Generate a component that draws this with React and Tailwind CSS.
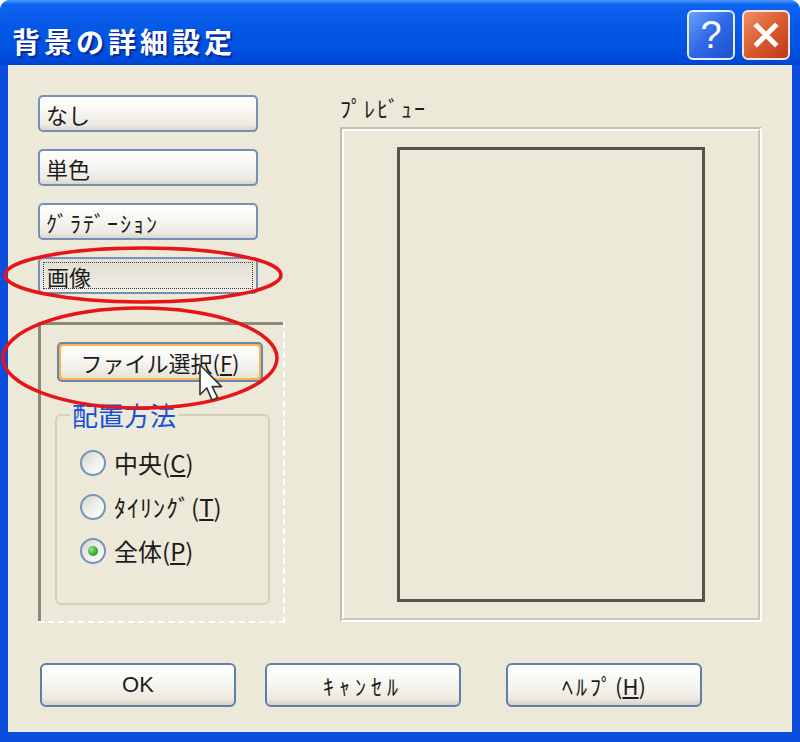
import React from "react";

function Btn({ children, pressed }) {
  if (pressed) {
    return (
      <div className="w-[220px] h-[37px] rounded-[5px] border-2 border-[#7390b6] bg-[linear-gradient(180deg,#e2e0d4_0%,#e9e7dd_60%,#f1efe8_100%)] p-[3px]">
        <div className="w-full h-full border border-dotted border-[#3a3a3a] flex items-center pl-[3px] text-[22px] leading-none">
          {children}
        </div>
      </div>
    );
  }
  return (
    <div className="w-[220px] h-[37px] rounded-[5px] border-2 border-[#7390b6] bg-[linear-gradient(180deg,#ffffff_0%,#f7f6f1_45%,#ebe9e0_85%,#d9d6ca_100%)] flex items-center pl-[6px] text-[22px] leading-none">
      {children}
    </div>
  );
}

function BottomBtn({ children, className = "" }) {
  return (
    <div className={"w-[196px] h-[44px] rounded-[6px] border-2 border-[#5f7fab] bg-[linear-gradient(180deg,#ffffff_0%,#f7f6f1_45%,#ebe9e0_85%,#d6d3c6_100%)] flex items-center justify-center text-[22px] leading-none " + className}>
      {children}
    </div>
  );
}

function Radio({ checked, children }) {
  return (
    <div className="flex items-center h-[44px]">
      <div className="w-[26px] h-[26px] rounded-full border-2 border-[#7394bb] bg-[linear-gradient(135deg,#d9d7cc_0%,#f1f0ea_55%,#ffffff_100%)] flex items-center justify-center">
        {checked && (
          <div className="w-[10px] h-[10px] rounded-full bg-[radial-gradient(circle_at_35%_35%,#8fe88f,#22a022_70%)]" />
        )}
      </div>
      <span className="ml-[8px] text-[24px] leading-none">{children}</span>
    </div>
  );
}

export default function App() {
  return (
    <div className="relative w-[800px] h-[742px] bg-white font-['Noto_Sans_CJK_JP','Noto_Sans',sans-serif] text-[#1c1c1c]">
      <div className="flex flex-col w-full h-full rounded-t-[10px] overflow-hidden bg-[#0b4ddd]">
        {/* Title bar */}
        <div className="h-[65px] shrink-0 flex items-start justify-between bg-[linear-gradient(180deg,#4a97fa_0%,#0d64ef_7%,#0559e6_40%,#0052e0_75%,#0045d4_100%)]">
          <div className="mt-[23px] ml-[12px] text-white font-bold text-[28px] leading-[36px] tracking-[4px] [text-shadow:2px_2px_1px_#0a2a98]">
            背景の詳細設定
          </div>
          <div className="flex gap-[7px] mt-[10px] mr-[10px]">
            <div className="w-[48px] h-[50px] rounded-[6px] border-2 border-[#e6edfb] bg-[linear-gradient(135deg,#6aa0f8_0%,#2f68e6_50%,#1f50d0_100%)] flex items-center justify-center text-white text-[38px] font-['Liberation_Sans',sans-serif] leading-none">
              ?
            </div>
            <div className="w-[48px] h-[50px] rounded-[6px] border-2 border-[#f3e4dc] bg-[linear-gradient(135deg,#f08f66_0%,#dc5a2f_50%,#bb3b18_100%)] flex items-center justify-center">
              <svg width="30" height="30" viewBox="0 0 30 30">
                <path d="M6 6 L24 24 M24 6 L6 24" stroke="white" strokeWidth="5" strokeLinecap="square" />
              </svg>
            </div>
          </div>
        </div>

        {/* Body */}
        <div className="flex-1 mx-[8px] mb-[10px] bg-[#ece9d8] flex flex-col">
          <div className="flex pl-[30px] pt-[30px]">
            {/* Left column */}
            <div className="w-[247px] flex flex-col">
              <div className="flex flex-col gap-[17px]">
                <Btn>なし</Btn>
                <Btn>単色</Btn>
                <Btn><span className="tracking-[2px]">ｸﾞﾗﾃﾞｰｼｮﾝ</span></Btn>
                <Btn pressed>画像</Btn>
              </div>
              <div className="mt-[28px] w-[247px] h-[301px] border-r-2 border-b-2 border-dashed border-white">
                <div className="h-full border-t-[3px] border-l-[3px] border-[#8c897b] pl-[16px] pt-[17px]">
                  <div className="w-[206px] h-[40px] rounded-[5px] border-2 border-[#6a86ad] bg-[#f7b54a] p-[2px]">
                    <div className="w-full h-full rounded-[3px] bg-[linear-gradient(180deg,#ffffff_0%,#f6f5ef_50%,#e6e3d8_100%)] flex items-center justify-center text-[22px] leading-none">
                      ファイル選択(<span className="underline">F</span>)
                    </div>
                  </div>
                  <fieldset className="mt-[19px] ml-[-2px] w-[215px] h-[204px] border-2 border-[#d3d0c2] rounded-[6px]">
                    <legend className="ml-[13px] px-[2px] text-[26px] leading-[28px] text-[#1650d8]">配置方法</legend>
                    <div className="pl-[23px] pt-[12px]">
                      <Radio>中央(<span className="underline">C</span>)</Radio>
                      <Radio><span className="tracking-[1px]">ﾀｲﾘﾝｸﾞ</span>(<span className="underline">T</span>)</Radio>
                      <Radio checked>全体(<span className="underline">P</span>)</Radio>
                    </div>
                  </fieldset>
                </div>
              </div>
            </div>

            {/* Preview */}
            <div className="ml-[55px] w-[422px] flex flex-col">
              <div className="h-[32px] leading-[24px] text-[22px] tracking-[2px]">ﾌﾟﾚﾋﾞｭｰ</div>
              <div className="h-[495px] border-2 border-t-[#c3bfb0] border-l-[#c3bfb0] border-r-white border-b-white">
                <div className="w-full h-full border-2 border-t-white border-l-white border-r-[#c9c5b6] border-b-[#c9c5b6] flex items-center justify-center">
                  <div className="w-[308px] h-[455px] border-[3px] border-[#55544c]" />
                </div>
              </div>
            </div>
          </div>

          {/* Bottom buttons */}
          <div className="flex pl-[32px] mt-[40px]">
            <BottomBtn><span className="font-['Liberation_Sans',sans-serif]">OK</span></BottomBtn>
            <BottomBtn className="ml-[29px]"><span className="tracking-[5px]">ｷｬﾝｾﾙ</span></BottomBtn>
            <BottomBtn className="ml-[45px]"><span className="tracking-[3px]">ﾍﾙﾌﾟ</span>(<span className="underline">H</span>)</BottomBtn>
          </div>
        </div>
      </div>

      {/* Red annotations and cursor overlay */}
      <svg className="absolute left-0 top-0 pointer-events-none" width="800" height="742" viewBox="0 0 800 742">
        <ellipse cx="143" cy="275" rx="138" ry="27" fill="none" stroke="#e8141a" strokeWidth="3.5" />
        <ellipse cx="140" cy="358" rx="137" ry="50" fill="none" stroke="#e8141a" strokeWidth="3.5" />
        <g transform="translate(200 365) scale(1.35)">
          <path d="M0 0 L0 22 L5 17 L9 26 L13 24 L9 16 L16 16 Z" fill="white" stroke="#333" strokeWidth="1.2" strokeLinejoin="round" />
        </g>
      </svg>
    </div>
  );
}
